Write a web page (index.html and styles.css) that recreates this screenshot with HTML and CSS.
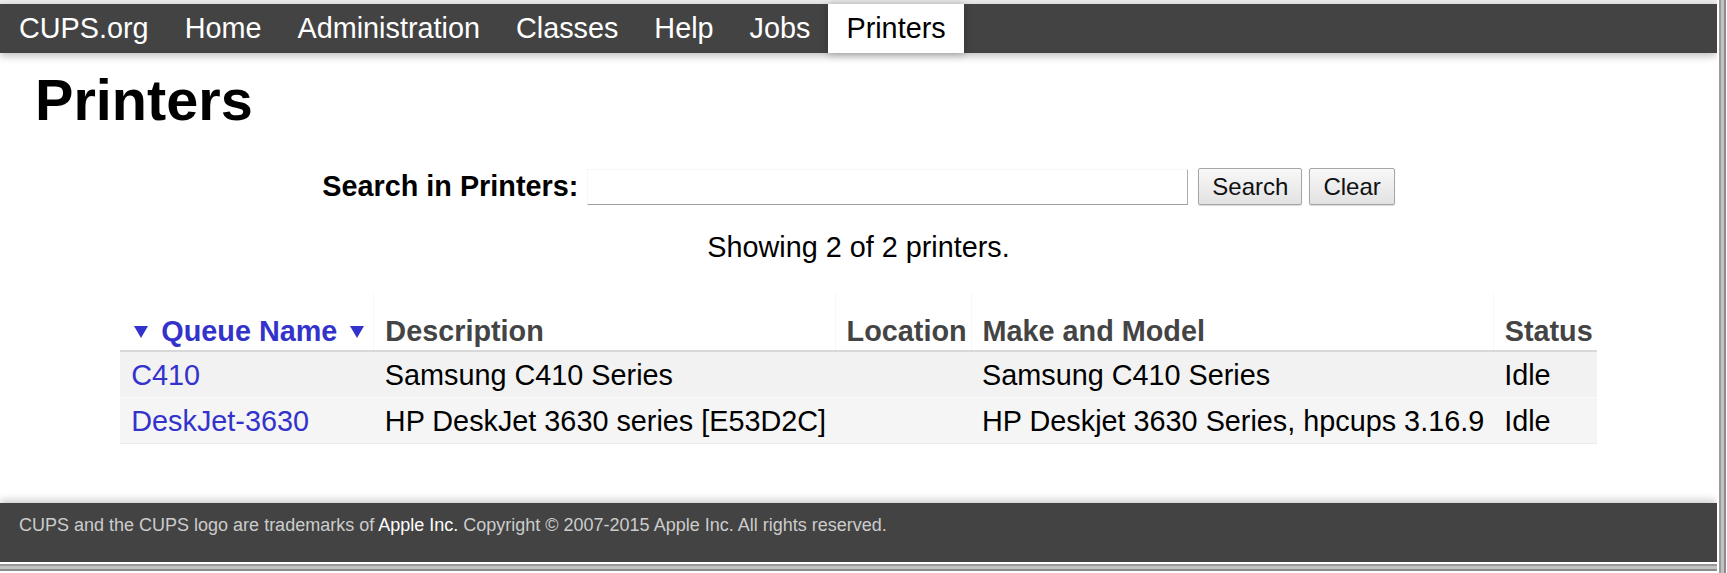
FILE: index.html
```html
<!DOCTYPE html>
<html lang="en">
<head>
<meta charset="utf-8">
<title>Printers - CUPS</title>
<link rel="stylesheet" href="styles.css">
</head>
<body>
<div class="window">
  <div class="page">
    <div class="topband"></div>
    <header class="header">
      <ul class="nav">
        <li><a href="#">CUPS.org</a></li>
        <li><a href="#">Home</a></li>
        <li><a href="#">Administration</a></li>
        <li><a href="#">Classes</a></li>
        <li><a href="#">Help</a></li>
        <li><a href="#">Jobs</a></li>
        <li><a class="active" href="#">Printers</a></li>
      </ul>
    </header>
    <main class="body">
      <h1 class="title">Printers</h1>
      <form class="search">
        <label class="search-label" for="q">Search in Printers:</label>
        <input class="search-input" id="q" type="search">
        <button class="btn" type="button">Search</button>
        <button class="btn" type="button">Clear</button>
      </form>
      <p class="count">Showing 2 of 2 printers.</p>
      <table class="list">
        <thead>
          <tr>
            <th class="sorted"><a href="#"><svg class="arrow arrow-left" viewBox="0 0 14 12" width="14" height="12"><path d="M0 0H14L7 12Z" fill="#3333cc"/></svg>Queue Name<svg class="arrow arrow-right" viewBox="0 0 14 12" width="14" height="12"><path d="M0 0H14L7 12Z" fill="#3333cc"/></svg></a></th>
            <th>Description</th>
            <th class="col-loc">Location</th>
            <th>Make and Model</th>
            <th class="col-last">Status</th>
          </tr>
        </thead>
        <tbody>
          <tr>
            <td><a href="#">C410</a></td>
            <td>Samsung C410 Series</td>
            <td class="col-loc"></td>
            <td>Samsung C410 Series</td>
            <td class="col-last">Idle</td>
          </tr>
          <tr>
            <td><a href="#">DeskJet-3630</a></td>
            <td>HP DeskJet 3630 series [E53D2C]</td>
            <td class="col-loc"></td>
            <td>HP Deskjet 3630 Series, hpcups 3.16.9</td>
            <td class="col-last">Idle</td>
          </tr>
        </tbody>
      </table>
    </main>
    <footer class="footer">
      <p class="footer-text">CUPS and the CUPS logo are trademarks of <a href="#">Apple Inc.</a> Copyright &copy; 2007-2015 Apple Inc. All rights reserved.</p>
    </footer>
  </div>
  <div class="frame-right"></div>
  <div class="frame-bottom"></div>
</div>
</body>
</html>
```

FILE: styles.css
```css
* { box-sizing: border-box; }

html, body {
  margin: 0;
  padding: 0;
  background: #ffffff;
}

body {
  font-family: "Liberation Sans", Arial, sans-serif;
  color: #000;
}

.window {
  width: 1727px;
  height: 573px;
  display: grid;
  grid-template-columns: 1717px 10px;
  grid-template-rows: 562px 11px;
  overflow: hidden;
}

.page {
  grid-column: 1;
  grid-row: 1;
  display: flex;
  flex-direction: column;
  background: #fff;
  overflow: hidden;
}

.frame-right {
  grid-column: 2;
  grid-row: 1 / span 2;
  background: linear-gradient(to right, #fff 0 2px, #9a9a9a 2px 4px, #c2c2c2 4px 7px, #8c8c8c 7px 9px, #fff 9px);
}

.frame-bottom {
  grid-column: 1;
  grid-row: 2;
  background: linear-gradient(to bottom, #fff 0 2px, #9a9a9a 2px 4px, #c2c2c2 4px 7px, #8c8c8c 7px 9px, #fff 9px);
}

.topband {
  height: 4px;
  background: #ebebeb;
  flex: none;
}

.header {
  flex: none;
  height: 49px;
  background: #434343;
  box-shadow: 0 3px 8px rgba(0, 0, 0, 0.25);
  position: relative;
  z-index: 2;
}

.nav {
  list-style: none;
  margin: 0;
  padding: 0 0 0 1px;
  display: flex;
  height: 100%;
}

.nav a {
  display: block;
  height: 49px;
  padding: 0 18px;
  line-height: 48px;
  font-size: 28.8px;
  color: #fff;
  text-decoration: none;
}

.nav a.active {
  background: #fff;
  color: #000;
  box-shadow: 0 1px 8px rgba(0, 0, 0, 0.25);
}

.body {
  flex: 1;
  padding: 15px 32px 0 35px;
}

.title {
  margin: 0;
  font-size: 57.6px;
  font-weight: bold;
  line-height: 64px;
}

.search {
  margin: 36px 0 0 -3px;
  display: flex;
  justify-content: center;
  align-items: center;
  height: 37px;
}

.search-label {
  font-size: 28.8px;
  font-weight: bold;
  margin-right: 9px;
}

.search-input {
  width: 601px;
  height: 36px;
  margin: 0 10px 0 0;
  padding: 0 4px;
  border: 1px solid;
  border-color: #f7f7f7 #b0b0b0 #a0a0a0 #f7f7f7;
  background: #fff;
  font-family: inherit;
  font-size: 24px;
  -webkit-appearance: none;
  appearance: none;
  outline: none;
}

.btn {
  height: 37px;
  padding: 0 13px;
  margin-right: 7px;
  font-family: inherit;
  font-size: 24px;
  color: #111;
  background: linear-gradient(#f8f8f8, #e2e2e2);
  border: 1px solid #a6a6a6;
  border-radius: 2px;
  box-shadow: 0 1px 1px rgba(0, 0, 0, 0.15);
}

.btn:last-child { margin-right: 0; }

.count {
  margin: 26px 0 0 -3px;
  text-align: center;
  font-size: 28.8px;
  line-height: 33px;
}

.list {
  margin: 29px auto 0;
  position: relative;
  left: -1.5px;
  border-collapse: collapse;
  font-size: 28.8px;
}

.list th {
  text-align: left;
  font-weight: bold;
  color: #444;
  padding: 22px 9px 2px 11px;
  line-height: 33px;
  border-left: 1px solid #f7f7f7;
  border-bottom: 2px solid #d8d8d8;
  white-space: nowrap;
}

.list th:first-child { border-left: none; }

.list th a {
  color: #3333cc;
  text-decoration: none;
}

.arrow {
  display: inline-block;
  vertical-align: 3px;
}

.arrow-left { margin: 0 13px 0 3px; }
.arrow-right { margin-left: 13px; }

.list td {
  padding: 7px 9px 5px 11px;
  line-height: 33px;
  white-space: nowrap;
  background: #f2f2f2;
  border-bottom: 1px solid #fafafa;
}

.list .col-loc,
.list .col-last {
  padding-right: 4px;
}

.list tbody tr:nth-child(2) td {
  background: #f5f5f5;
  border-bottom: 1px solid #ececec;
}

.list td a {
  color: #3333cc;
  text-decoration: none;
}

.footer {
  flex: none;
  height: 59px;
  background: #434343;
  box-shadow: 0 -3px 8px rgba(0, 0, 0, 0.2);
  position: relative;
  z-index: 2;
  padding: 12px 19px 0;
}

.footer-text {
  margin: 0;
  font-size: 18px;
  line-height: 21px;
  color: #cccccc;
}

.footer-text a {
  color: #fff;
  text-decoration: none;
}
```
